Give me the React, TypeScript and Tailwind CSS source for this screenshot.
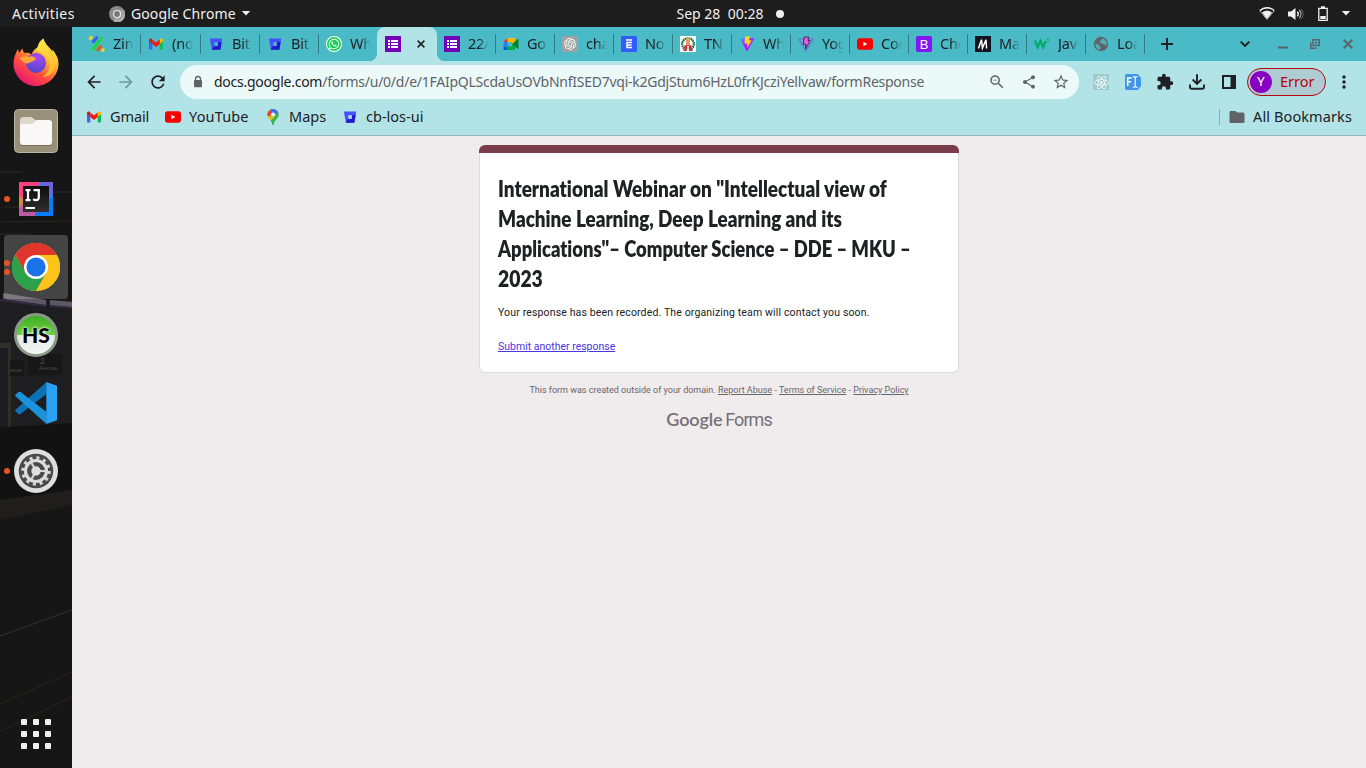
import React from "react";
import {
  MdArrowBack,
  MdArrowForward,
  MdRefresh,
  MdShare,
  MdStarBorder,
  MdExtension,
  MdFolder,
  MdMoreVert,
  MdOutlineZoomOut,
} from "react-icons/md";
import { FaReact, FaWhatsapp } from "react-icons/fa";
import { SiOpenai } from "react-icons/si";

/* ---------- favicons ---------- */

const Zing = () => (
  <svg viewBox="0 0 16 16" className="size-4">
    <path d="M12 2.600 4.300 13.200" stroke="#1ed740" strokeWidth="3.400" strokeLinecap="round" />
    <path d="M4.600 5.400 7.600 1.800" stroke="#3d5afe" strokeWidth="3.200" strokeLinecap="round" />
    <path d="M1.300 2.600 2.300 1.500" stroke="#ffd21e" strokeWidth="3" strokeLinecap="round" />
    <path d="M9 13.800 11.600 10.600" stroke="#f4511e" strokeWidth="3.200" strokeLinecap="round" />
    <path d="M13.600 14.600 14.300 13.800" stroke="#ffd21e" strokeWidth="3" strokeLinecap="round" />
  </svg>
);

const Gmail = () => (
  <svg viewBox="0 0 16 16" className="size-4">
    <path d="M1 4.200v8.300c0 .6.4 1 1 1h2.300V7.200L1 4.200z" fill="#4263f4" />
    <path d="M11.700 13.500H14c.6 0 1-.4 1-1V4.200l-3.300 3v6.300z" fill="#0fbe53" />
    <path d="M11.700 3.600v4.200L15 5.200V4c0-1.400-1.600-2-2.500-1.200z" fill="#fbbc04" />
    <path d="M4.300 8V3.500L8 6.400l3.700-2.900V8L8 10.900z" fill="#f4170c" />
    <path d="M1 4v1.200l3.300 2.600V3.500l-.8-.7C2.600 2.100 1 2.600 1 4z" fill="#d01c1f" />
  </svg>
);

const Bitbucket = ({ hole = "#4abbc6" }: { hole?: string }) => (
  <svg viewBox="0 0 16 16" className="size-4">
    <path d="M1.900 2.500h12.300l-1.800 11.200H3.900z" fill="#4550fa" />
    <path d="M13.700 6H10l-.6 4H6.300l-2.800 3.700h8.900z" fill="#1b10c4" opacity=".85" />
    <path d="M6 6.200h4.200l-.7 3.900H6.700z" fill={hole} />
  </svg>
);

const Whatsapp = () => (
  <span className="flex size-4 items-center justify-center rounded-full bg-white">
    <span className="flex size-3.5 items-center justify-center rounded-full bg-[#18cf55]">
      <FaWhatsapp className="size-3 text-white" />
    </span>
  </span>
);

const Forms = () => (
  <svg viewBox="0 0 16 16" className="size-4">
    <rect width="16" height="16" rx=".6" fill="#7200b8" />
    <path d="M3 4h2v2H3zm3 0h7v2H6zM3 7h2v2H3zm3 0h7v2H6zM3 10h2v2H3zm3 0h7v2H6z" fill="#fff" />
  </svg>
);

const Meet = () => (
  <svg viewBox="0 0 16 16" className="size-4">
    <path d="M4.500 2v4H.5z" fill="#ea2d22" />
    <path d="M.5 6h4v4.500h-4z" fill="#2684fc" />
    <path d="M.5 10.500h4V14h-3c-.6 0-1-.5-1-1z" fill="#0a5fc9" />
    <path d="M4.500 2H11c.7 0 1 .4 1 1v3L9 8V6H4.500z" fill="#ffba00" />
    <path d="M4.500 10.500H9V8l3 2.500V13c0 .6-.4 1-1 1H4.500z" fill="#00ac47" />
    <path d="M9 8l5.500-4.700c.5-.4 1-.1 1 .5v8.500c0 .6-.5.8-1 .4z" fill="#00832d" />
  </svg>
);

const ChatGpt = () => (
  <span className="flex size-4 items-center justify-center rounded-[3px] bg-[#a0a3a3]">
    <SiOpenai className="size-3 text-white" />
  </span>
);

const EraFavicon = () => (
  <svg viewBox="0 0 16 16" className="size-4">
    <rect width="16" height="16" rx="1" fill="#315efb" />
    <path d="M5 4h6M11 6.600H6v4.900h5M6 9h4.500" stroke="#fff" strokeWidth="1.500" fill="none" />
  </svg>
);

const Emblem = () => (
  <svg viewBox="0 0 16 16" className="size-4">
    <rect width="16" height="16" fill="#fff" />
    <circle cx="8" cy="8" r="5.800" fill="none" stroke="#146b35" strokeWidth="2.200" strokeDasharray="1.600 .5" />
    <path d="M6 3h4v6H6z" fill="#e59a62" />
    <path d="M6.500 1.500h3v2h-3z" fill="#dfbf65" />
    <path d="M4.500 9.200h7V12L10 13H6l-1.500-1z" fill="#e01c35" />
    <path d="M7.200 10h1.600v5H7.200z" fill="#fff" />
    <path d="M3.500 13.500h3V15h-3zM9.500 13.500h3V15h-3z" fill="#be2736" />
  </svg>
);

const Vite = () => (
  <svg viewBox="0 0 16 16" className="size-4">
    <defs>
      <linearGradient id="viteBody" x1="0" y1="0" x2=".7" y2="1">
        <stop offset="0" stopColor="#28bfff" />
        <stop offset=".45" stopColor="#a32aff" />
        <stop offset="1" stopColor="#b600ff" />
      </linearGradient>
    </defs>
    <path d="M.8 2.500 8 1.400l7.200 1.100L8 15.600z" fill="url(#viteBody)" />
    <path d="M6 .8 11 0 9.800 4.300l3 .2L8 12l.5-4.500H5.600z" fill="#ffd51c" />
  </svg>
);

const ViteOutline = () => (
  <svg viewBox="0 0 16 16" className="size-4">
    <path d="M.9 3h14.200L8 15z" fill="#4abbc6" stroke="#6d75cf" strokeWidth="1.200" />
    <path d="M6.300 1h4.400L10 4.500h2L7.500 13l.3-4.800H5z" fill="#ee58e6" stroke="#292449" strokeWidth=".9" />
  </svg>
);

const Youtube = () => (
  <svg viewBox="0 0 16 16" className="size-4">
    <rect y="2.300" width="16" height="11.400" rx="2.700" fill="#fc0000" />
    <path d="M6.400 5.800 10.300 8l-3.900 2.200z" fill="#fff" />
  </svg>
);

const Bootstrap = () => (
  <span className="flex size-4 items-center justify-center rounded-[2px] bg-[#8514f5] font-['Liberation_Sans',sans-serif] text-[13px] leading-none text-white">
    B
  </span>
);

const Medium = () => (
  <svg viewBox="0 0 16 16" className="size-4">
    <rect width="16" height="16" fill="#14121c" />
    <path d="M3.400 12.500 6.500 3.700l.9 8.300 3.600-8.300.6 8.800" stroke="#fff" strokeWidth="1.500" fill="none" />
  </svg>
);

const W3 = () => (
  <svg viewBox="0 0 16 16" className="size-4">
    <path d="M1 4.500l2.600 6.800L6.500 5l2.700 6.300L11.800 5" stroke="#04aa6d" strokeWidth="2.300" fill="none" />
    <path d="M12.600 2.500h2.200l-1.200 1.400c1.200 0 1.500.7 1.200 1.300-.4.700-1.400.8-2.200.3" stroke="#04aa6d" strokeWidth=".8" fill="none" />
  </svg>
);

const Globe = () => (
  <svg viewBox="0 0 16 16" className="size-4">
    <circle cx="8" cy="8" r="7.200" fill="#5f6368" />
    <path d="M2.300 7.500c1.500.2 3.200.6 3.700 1.700.5 1.200 1.700 1 1.500 2.300-.1.800-.7 1.300-.6 2.400a6 6 0 0 1-4.600-6.400zM9 2.200c.3 1-.6 1.300-1.200 1.800-.7.600.2 1-.4 1.600-.6.500-1.300.2-1.400 1.100.9.200 2.300 0 3 .8.800 1 2.500.2 2.900 1.300.2.800.8.900 1.700.9A6 6 0 0 0 9 2.200z" fill="#4abbc6" opacity=".85" />
  </svg>
);

const Maps = () => (
  <svg viewBox="0 0 16 16" className="size-4">
    <clipPath id="pin">
      <path d="M8 0a5.600 5.600 0 0 0-5.600 5.600C2.400 9.500 6.500 10.800 7.300 15c.2 1.300 1.200 1.300 1.400 0 .8-4.200 4.900-5.500 4.900-9.400A5.600 5.600 0 0 0 8 0z" />
    </clipPath>
    <g clipPath="url(#pin)">
      <path d="M0 0h16v16H0z" fill="#34b853" />
      <path d="M8-1 8 5 2 8-1 4z" fill="#ea4335" />
      <path d="M4.500-1H16v4.500L8.500 6z" fill="#3b70f4" />
      <path d="M13.500 3.500 4 13.500.5 8.500l4-1.800L8 8z" fill="#fbbc04" />
      <path d="M14 3.500 7 11v6h9z" fill="#34b853" />
    </g>
    <circle cx="8" cy="5.600" r="2" fill="#fff" />
  </svg>
);

/* ---------- browser chrome ---------- */

type TabInfo = { label: string; icon: React.ReactNode; size?: string };

const leftTabs: TabInfo[] = [
  { label: "Zin", icon: <Zing /> },
  { label: "(no", icon: <Gmail />, size: "w-[60px]" },
  { label: "Bit", icon: <Bitbucket /> },
  { label: "Bit", icon: <Bitbucket /> },
];

const rightTabs: TabInfo[] = [
  { label: "22/", icon: <Forms /> },
  { label: "Go", icon: <Meet /> },
  { label: "cha", icon: <ChatGpt /> },
  { label: "No", icon: <EraFavicon /> },
  { label: "TN", icon: <Emblem /> },
  { label: "Wh", icon: <Vite /> },
  { label: "Yog", icon: <ViteOutline /> },
  { label: "Con", icon: <Youtube /> },
  { label: "Cho", icon: <Bootstrap /> },
  { label: "Ma", icon: <Medium /> },
  { label: "Jav", icon: <W3 /> },
  { label: "Loa", icon: <Globe /> },
];

function Tab({ label, icon, size = "w-[59px]", divider = true }: TabInfo & { divider?: boolean }) {
  return (
    <div className={`flex h-[34px] shrink-0 items-center pl-[7px] ${size}`}>
      <span className="flex size-4 shrink-0 items-center">{icon}</span>
      <span className="ml-2 w-[21px] shrink-0 text-[14.5px] tracking-[-0.2px] whitespace-nowrap text-[#202124] [mask-image:linear-gradient(to_right,black_50%,transparent)]">
        {label}
      </span>
      {divider && <span className="ml-auto h-5 w-px bg-[#347d86]" />}
    </div>
  );
}

function TabStrip() {
  return (
    <div className="flex h-[34px] items-center bg-[#4abbc6] pl-[10px]">
      {leftTabs.map((t, i) => (
        <Tab key={i} {...t} />
      ))}
      <Tab label="Wh" icon={<Whatsapp />} size="w-[58px]" divider={false} />
      <div className="relative flex h-[34px] w-[60px] shrink-0 items-center rounded-t-lg bg-[#b2e3e6] pl-2">
        <span className="absolute bottom-0 -left-2 size-2 bg-[radial-gradient(circle_at_0_0,transparent_8px,#b2e3e6_8.5px)]" />
        <span className="absolute -right-2 bottom-0 size-2 bg-[radial-gradient(circle_at_100%_0,transparent_8px,#b2e3e6_8.5px)]" />
        <Forms />
        <svg viewBox="0 0 8 8" className="ml-4 size-2">
          <path d="M.6.6l6.800 6.800M7.400.6.6 7.400" stroke="#202124" strokeWidth="1.600" />
        </svg>
      </div>
      {rightTabs.map((t, i) => (
        <Tab key={i} {...t} />
      ))}
      <svg viewBox="0 0 12 12" className="ml-4 size-3 shrink-0">
        <path d="M6 0v12M0 6h12" stroke="#202124" strokeWidth="1.900" />
      </svg>
      <svg viewBox="0 0 10 6" className="ml-[67px] h-1.5 w-2.5 shrink-0">
        <path d="M.7.700 5 5 9.300.7" stroke="#202124" strokeWidth="1.900" fill="none" />
      </svg>
      <svg viewBox="0 0 10 10" className="ml-[28px] size-2.5 shrink-0">
        <path d="M0 8.500h10" stroke="#5f6368" strokeWidth="2" />
      </svg>
      <svg viewBox="0 0 10 10" className="ml-[22px] size-2.5 shrink-0">
        <path d="M3 .8h6.200v5.700H3zM6.500 9.200H.8V3.500" stroke="#5f6368" strokeWidth="1.500" fill="none" />
        <path d="M5 2.800h2.200v1.800H5z" fill="#5f6368" />
      </svg>
      <svg viewBox="0 0 10 10" className="ml-[23px] size-2.5 shrink-0">
        <path d="M.8.8l8.400 8.400M9.200.8.8 9.200" stroke="#5f6368" strokeWidth="2" />
      </svg>
    </div>
  );
}

function Toolbar() {
  return (
    <div className="flex h-[42px] items-center bg-[#b2e3e6] pl-3 text-[#202124]">
      <MdArrowBack className="size-5 shrink-0" />
      <MdArrowForward className="ml-3 size-5 shrink-0 text-[#72979b]" />
      <MdRefresh className="ml-3 size-5 shrink-0" />
      <div className="ml-3 flex h-[34px] w-[899px] shrink-0 items-center rounded-full bg-[#ebf9f9] pl-[11px] text-[#5f6368]">
        <svg viewBox="0 0 14 14" className="size-3.5 shrink-0">
          <path d="M4.500 5.500V4a2.500 2.500 0 0 1 5 0v1.500" stroke="currentColor" strokeWidth="1.300" fill="none" />
          <rect x="3" y="5" width="8" height="7.200" rx="1" fill="currentColor" />
        </svg>
        <span className="mb-0.5 ml-[9px] w-[770px] shrink-0 text-[14px] tracking-[-0.25px] whitespace-nowrap">
          <span className="text-[#202124]">docs.google.com</span>
          /forms/u/0/d/e/1FAIpQLScdaUsOVbNnfISED7vqi-k2GdjStum6HzL0frKJcziYellvaw/formResponse
        </span>
        <MdOutlineZoomOut className="ml-1 size-[18px] shrink-0" />
        <MdShare className="ml-[15px] size-4 shrink-0" />
        <MdStarBorder className="ml-[15px] size-[18px] shrink-0" />
      </div>
      <span className="ml-[14px] flex size-4 shrink-0 items-center justify-center bg-[#a0cbce]">
        <FaReact className="size-[15px] text-white" />
      </span>
      <svg viewBox="0 0 16 16" className="ml-4 size-4 shrink-0">
        <path d="M1.500 0h11.300L16 4v8l-3.200 4H1.500A1.500 1.500 0 0 1 0 14.500v-13A1.500 1.500 0 0 1 1.500 0z" fill="#4296e8" />
        <path d="M2.700 12V4h4M2.700 7.700h3.500" stroke="#fff" strokeWidth="1.600" fill="none" />
        <path d="M7.800 2.700h1.400l1 .8 1-.8h1.400M10.200 3.500v9M7.800 13.300h1.400l1-.8 1 .8h1.400" stroke="#fff" strokeWidth="1.100" fill="none" />
      </svg>
      <MdExtension className="ml-[15px] size-[18px] shrink-0" />
      <svg viewBox="0 0 16 16" className="ml-[15px] size-4 shrink-0">
        <path d="M8 .2v9M3.600 5.500 8 9.800l4.400-4.300M1 10.500V13c0 1 .7 1.800 1.800 1.800h10.400c1.100 0 1.800-.8 1.800-1.800v-2.500" stroke="currentColor" strokeWidth="1.900" fill="none" />
      </svg>
      <svg viewBox="0 0 14 14" className="ml-[17px] size-3.5 shrink-0">
        <path d="M1 1h12v12H1z" stroke="currentColor" strokeWidth="2" fill="none" />
        <path d="M8.500 1H13v12H8.500z" fill="currentColor" />
      </svg>
      <div className="ml-[11px] flex h-7 w-[79px] shrink-0 items-center rounded-full border border-[#b3050b] bg-[#aeccd2] pl-[2px]">
        <span className="flex size-[22px] items-center justify-center rounded-full bg-[#8a00c3] font-['Roboto',sans-serif] text-[13px] text-white">
          Y
        </span>
        <span className="ml-2 text-[14.5px] text-[#b3050b]">Error</span>
      </div>
      <MdMoreVert className="ml-[8px] size-[20px] shrink-0" />
    </div>
  );
}

function Bookmarks() {
  return (
    <div className="flex h-[33px] items-center border-b border-[#92b5ba] bg-[#b2e3e6] pr-[14px] pb-[5px] pl-[14px] text-[14.5px] whitespace-nowrap text-[#202124]">
      <Gmail />
      <span className="ml-2 w-[55px] tracking-[-0.1px]">Gmail</span>
      <Youtube />
      <span className="ml-2 w-[76px] tracking-[0.15px]">YouTube</span>
      <Maps />
      <span className="ml-2 w-[53px]">Maps</span>
      <Bitbucket hole="#b2e3e6" />
      <span className="ml-2">cb-los-ui</span>
      <span className="ml-auto h-4 w-px bg-[#86afb4]" />
      <MdFolder className="ml-2 size-[18px] text-[#5f6368]" />
      <span className="ml-[7px] tracking-[0.1px]">All Bookmarks</span>
    </div>
  );
}

/* ---------- desktop shell ---------- */

function TopBar() {
  return (
    <header className="grid h-[27px] grid-cols-[1fr_auto_1fr] items-center bg-[#1d1d1d] text-[14px] whitespace-nowrap text-[#f0f0f0]">
      <div className="flex items-center pl-3">
        <span className="w-[97px] tracking-[0.45px]">Activities</span>
        <svg viewBox="0 0 16 16" className="size-4">
          <circle cx="8" cy="8" r="8" fill="#8a8a8a" />
          <path d="M8 8 5 16a8 8 0 0 0 11-8z" fill="#b7b7b7" />
          <path d="M8 4h7a8 8 0 0 1 1 4L10 16H7z" fill="#a4a4a4" />
          <circle cx="8" cy="8" r="4.100" fill="#e8e8e8" />
          <circle cx="8" cy="8" r="2.900" fill="#777" />
        </svg>
        <span className="ml-1.5 tracking-[0.1px]">Google Chrome</span>
        <svg viewBox="0 0 10 6" className="ml-[5px] h-[5px] w-[10px]">
          <path d="M0 0h10L5 5.500z" fill="#f0f0f0" />
        </svg>
      </div>
      <div className="flex items-center pl-[95px]">
        <span className="whitespace-pre">Sep 28  00:28</span>
        <span className="ml-[13px] size-2 rounded-full bg-[#f0f0f0]" />
      </div>
      <div className="flex items-center justify-end pr-[15px]">
        <svg viewBox="0 0 16 13" className="h-[13px] w-4">
          <path d="M.8 3.800C5-.100 11-.100 15.200 3.800L8 12.500z" stroke="#aaa" strokeWidth="1" fill="none" />
          <path d="M.8 3.500C5-.200 11-.200 15.200 3.500" stroke="#f0f0f0" strokeWidth="1.400" fill="none" />
          <path d="M3 5.500c3-2.300 7-2.300 10 0L8 12z" fill="#f0f0f0" />
        </svg>
        <svg viewBox="0 0 16 14" className="ml-[13px] h-3.5 w-4">
          <path d="M0 4.500h3L7.500 1v12L3 9.500H0z" fill="#f0f0f0" />
          <path d="M9.300 4.700c1.200 1.300 1.200 3.300 0 4.600" stroke="#f0f0f0" strokeWidth="1.300" fill="none" />
          <path d="M11.300 3c2.100 2.300 2.100 5.700 0 8" stroke="#bbb" strokeWidth="1.200" fill="none" />
          <path d="M13 1.800c2.800 3 2.800 7.400 0 10.400" stroke="#666" strokeWidth="1" fill="none" />
        </svg>
        <svg viewBox="0 0 10 15" className="ml-[14px] h-[15px] w-[10px]">
          <path d="M.8 2.300h8.400v12H.8z" stroke="#f0f0f0" strokeWidth="1.300" fill="none" />
          <path d="M3 .3h4v2H3zM2.300 10h5.400v3H2.300z" fill="#f0f0f0" />
        </svg>
        <svg viewBox="0 0 10 6" className="ml-[13px] h-[5px] w-[10px]">
          <path d="M0 0h10L5 5.500z" fill="#f0f0f0" />
        </svg>
      </div>
    </header>
  );
}

const Firefox = () => (
  <svg viewBox="0 0 46 48" className="mb-0.5 h-[48px] w-[46px]">
    <defs>
      <linearGradient id="fxBody" x1=".85" y1=".1" x2=".25" y2="1">
        <stop offset="0" stopColor="#fff44f" />
        <stop offset=".35" stopColor="#ffa92e" />
        <stop offset=".65" stopColor="#ff4b42" />
        <stop offset="1" stopColor="#e6117b" />
      </linearGradient>
      <radialGradient id="fxGlobe" cx=".6" cy=".2" r=".9">
        <stop offset="0" stopColor="#a947f5" />
        <stop offset="1" stopColor="#4648c9" />
      </radialGradient>
      <linearGradient id="fxTail" x1="0" y1="0" x2="1" y2="1">
        <stop offset="0" stopColor="#fff04d" />
        <stop offset="1" stopColor="#ffb52c" />
      </linearGradient>
    </defs>
    <path d="M5 11c.3 2 1 3.300 1.500 4 .8-2 1.700-3.300 3-4.500.2 2 1 3.500 2 4.500 3.500-.5 5.500.3 7 1.500 1-3 3-5.500 6-7C25 5.500 27 2.500 30.500.5c1 5 4.500 7.500 7 10.500l1.500 3.500.5-3c2.500 3.500 6 8 6 14C45.500 38 35 48 23 48S.5 38 .5 25.500C.5 20 2.500 15 5 11z" fill="url(#fxBody)" />
    <path d="M23 12c2-3.500 5-8 7.500-11.500 1 5 4.500 7.500 7 10.500 4 5 6 11 4.500 18-1.500 6-7 10-13 10 6-3 9-9 7-15-1.500-6-6-9-13-12z" fill="url(#fxTail)" opacity=".85" />
    <circle cx="23" cy="25" r="10" fill="url(#fxGlobe)" />
    <path d="M6 20c3-1 6-2 10-1 2-1.500 5-.5 7 1.500-1 2.500-4 3-6 4-2 1.500-4 1-6 0z" fill="#ffa436" />
  </svg>
);

const Files = () => (
  <svg viewBox="0 0 44 44" className="size-11">
    <rect x=".5" y=".5" width="43" height="43" rx="4" fill="#999079" stroke="#bbb5a5" />
    <path d="M6 12c0-2 1-4 3-4h9l3 4h14c2 0 3 1 3 3v19c0 2-1 3-3 3H9c-2 0-3-1-3-3z" fill="#777060" />
    <path d="M6 14v-3c0-2 1-3 3-3h8c2 0 3 3 5 3h4v8H6z" fill="#dcd8cc" />
    <path d="M6 17c0-1 .8-2 2-2h10c2 0 3-4 6-4h11c2 0 3 1 3 3v19c0 2-1 3-3 3H9c-2 0-3-1-3-3z" fill="#f9f8f6" />
  </svg>
);

const Idea = () => (
  <svg viewBox="0 0 34 34" className="size-[34px]">
    <defs>
      <linearGradient id="ideaFace" x1="0" y1="0" x2="0" y2="1">
        <stop offset="0" stopColor="#0c0c0c" />
        <stop offset="1" stopColor="#303030" />
      </linearGradient>
    </defs>
    <rect width="34" height="34" fill="#fe417d" />
    <path d="M20 0h14v34H16z" fill="#3d7df0" />
    <path d="M20 0h14v14z" fill="#6b65dc" />
    <path d="M14 34h20V14z" fill="#087cfa" />
    <path d="M0 13l5 5-1 8-4 3z" fill="#c58a45" />
    <path d="M0 26l5-4 12 12H0z" fill="#bb5ca4" />
    <rect x="4" y="4" width="26" height="26" fill="url(#ideaFace)" />
    <path d="M6.500 8.200h5M9 8.200v10M6.500 18.200h5M14.500 8.200h5.300v7c0 2.500-1.600 3-3 3-1 0-1.800-.3-2.600-1" stroke="#fff" strokeWidth="2.200" fill="none" />
    <path d="M6.500 26h9.500" stroke="#fff" strokeWidth="2" />
  </svg>
);

const ChromeLogo = () => (
  <svg viewBox="0 0 48 48" className="size-12">
    <circle cx="24" cy="24" r="24" fill="#fcc31b" />
    <path d="M24 12h20.800A24 24 0 0 0 3.200 12l10.400 18z" fill="#df352c" />
    <path d="M13.600 30 3.200 12A24 24 0 0 0 24 48l10.400-18z" fill="#2da04c" />
    <path d="M24 12h20.800A24 24 0 0 1 24 48l10.400-18z" fill="#fcc31b" />
    <circle cx="24" cy="24" r="12" fill="#fff" />
    <circle cx="24" cy="24" r="9.600" fill="#1a73e8" />
  </svg>
);

const HeidiSql = () => (
  <span className="flex size-11 items-center justify-center rounded-full border-[3px] border-[#8a9a89] bg-[linear-gradient(#3fae24_0,#6fd03d_50%,#e2e6e2_50%,#f6f6f6_100%)]">
    <span className="font-['Lato',sans-serif] text-[21px] font-black text-black [text-shadow:0_0_3px_white,0_0_2px_white]">
      HS
    </span>
  </span>
);

const VsCode = () => (
  <svg viewBox="0 0 42 42" className="size-[42px]">
    <path d="M31.500 0 .8 27.500c-.8.800-.8 1.500 0 2.300L3.500 32c.7.500 1.300.5 2 0l26-20z" fill="#0d71b5" />
    <path d="M31.500 42 .8 14.500c-.8-.8-.8-1.500 0-2.300L3.500 10c.7-.5 1.300-.5 2 0l26 20z" fill="#1b93dc" />
    <path d="M31.300 0 42 3.700v34.600L31.300 42z" fill="#29a2f4" />
  </svg>
);

const Settings = () => (
  <svg viewBox="0 0 44 44" className="size-11">
    <circle cx="22" cy="22" r="22" fill="#dedede" />
    <circle cx="22" cy="22" r="17.300" fill="#4a4a4a" />
    <circle cx="22" cy="22" r="13" fill="none" stroke="#d7d7d7" strokeWidth="3.500" strokeDasharray="3 3.807" />
    <circle cx="22" cy="22" r="10.500" fill="none" stroke="#dcdcdc" strokeWidth="3.200" />
    <path d="M22 22h10M22 22l-5-9M22 22l-5 9" stroke="#d7d7d7" strokeWidth="2.200" />
    <circle cx="22" cy="22" r="4.700" fill="#dedede" />
  </svg>
);

const dockApps = [
  { name: "firefox", icon: <Firefox />, dots: 0 },
  { name: "files", icon: <Files />, dots: 0 },
  { name: "idea", icon: <Idea />, dots: 1 },
  { name: "chrome", icon: <ChromeLogo />, dots: 2 },
  { name: "heidi", icon: <HeidiSql />, dots: 0 },
  { name: "code", icon: <VsCode />, dots: 0 },
  { name: "settings", icon: <Settings />, dots: 1 },
];

function Wallpaper() {
  return (
    <svg viewBox="0 27 72 741" preserveAspectRatio="none" className="absolute inset-0 h-full w-full">
      <path d="M0 27h72v741H0z" fill="#161616" />
      <path d="M0 172h22M5 207h28M0 222l72-1M0 234h30M30 192h42" stroke="#2b2921" strokeWidth="1" />
      <path d="M0 300h72v126H0z" fill="#1e1e20" />
      <path d="M3 293l43 7v5L3 299zM50 300l22 2v5l-22-2z" fill="#5c5866" />
      <path d="M0 300l46 6M50 306l22 2" stroke="#352c48" strokeWidth="1.500" />
      <path d="M0 343h11v84H0z" fill="#302e28" />
      <path d="M0 348h8v79H0z" fill="#1a1c20" />
      <path d="M10 360h14v16H10zM28 354h34v21H28z" fill="#171717" />
      <path d="M0 428l72-5v75L0 515z" fill="#121212" />
      <path d="M0 500l72-10v15L0 520z" fill="#201e1a" />
      <path d="M0 636 72 610" stroke="#3c3a35" strokeWidth=".8" />
      <path d="M0 704 72 672M0 731 72 697" stroke="#22201c" strokeWidth="1.500" />
      <g fill="#4f4f4e" fontFamily="Liberation Sans, sans-serif">
        <text x="40" y="364" fontSize="9">2</text>
        <text x="39" y="370" fontSize="5.500">Avenue</text>
        <text x="9" y="372" fontSize="4.500">venue</text>
      </g>
    </svg>
  );
}

function Dock() {
  return (
    <nav className="relative w-[72px] shrink-0">
      <Wallpaper />
      <div className="relative flex h-full flex-col items-center pt-[2px]">
        {dockApps.map((app) => (
          <div key={app.name} className="flex h-[68px] w-full items-center justify-center">
            <div
              className={`relative flex size-16 items-center justify-center rounded ${app.name === "chrome" ? "bg-white/20" : ""}`}
            >
              {app.icon}
              <span className="absolute inset-y-0 left-0 flex flex-col items-center justify-center gap-[3px]">
                {Array.from({ length: app.dots }, (_, i) => (
                  <span key={i} className="size-1.5 rounded-full bg-[#e95420]" />
                ))}
              </span>
            </div>
          </div>
        ))}
        <div className="mt-auto mb-[19px] grid grid-cols-3 gap-1.5">
          {Array.from({ length: 9 }, (_, i) => (
            <span key={i} className="size-1.5 rounded-[1px] bg-[#f1f1ec]" />
          ))}
        </div>
      </div>
    </nav>
  );
}

/* ---------- form page ---------- */

function FormPage() {
  return (
    <main className="flex flex-1 flex-col items-center bg-[#f0ebed] pt-[9px] font-['Roboto',sans-serif]">
      <section className="h-[228px] w-[480px]">
        <div className="h-2 rounded-t-md bg-[#7b3d4a]" />
        <div className="h-[220px] rounded-b-md border border-t-0 border-[#dadce0] bg-white px-[18px] pt-5">
          <h1 className="font-['Lato',sans-serif] text-[23px] leading-[30px] font-extrabold whitespace-nowrap text-[#202124] [font-variant-ligatures:none]">
            <span className="block w-max origin-left scale-x-[0.825]">International Webinar on "Intellectual view of</span>
            <span className="block w-max origin-left scale-x-[0.82]">Machine Learning, Deep Learning and its</span>
            <span className="block w-max origin-left scale-x-[0.8]">Applications"– Computer Science – DDE – MKU –</span>
            <span className="block w-max origin-left scale-x-[0.84]">2023</span>
          </h1>
          <p className="mt-3 text-[10.5px] leading-4 tracking-[0.145px] text-[#202124]">
            Your response has been recorded. The organizing team will contact you soon.
          </p>
          <a className="mt-[18px] block text-[10.5px] leading-4 text-[#4b36e0] underline">Submit another response</a>
        </div>
      </section>
      <p className="mt-[9px] text-[9px] leading-4 text-[#6a6669]">
        This form was created outside of your domain. <u>Report Abuse</u> - <u>Terms of Service</u> - <u>Privacy Policy</u>
      </p>
      <div className="mt-[9px] flex items-baseline leading-6 text-[#757175]">
        <span className="w-[59px] font-['Lato',sans-serif] text-[18px] font-semibold tracking-[-0.1px]">Google</span>
        <span className="text-[18px] tracking-[-0.95px]">Forms</span>
      </div>
    </main>
  );
}

export default function App() {
  return (
    <div className="flex h-[768px] w-[1366px] flex-col overflow-hidden bg-[#171716] font-['Noto_Sans',sans-serif]">
      <TopBar />
      <div className="flex min-h-0 flex-1">
        <Dock />
        <div className="flex min-w-0 flex-1 flex-col">
          <TabStrip />
          <Toolbar />
          <Bookmarks />
          <FormPage />
        </div>
      </div>
    </div>
  );
}
